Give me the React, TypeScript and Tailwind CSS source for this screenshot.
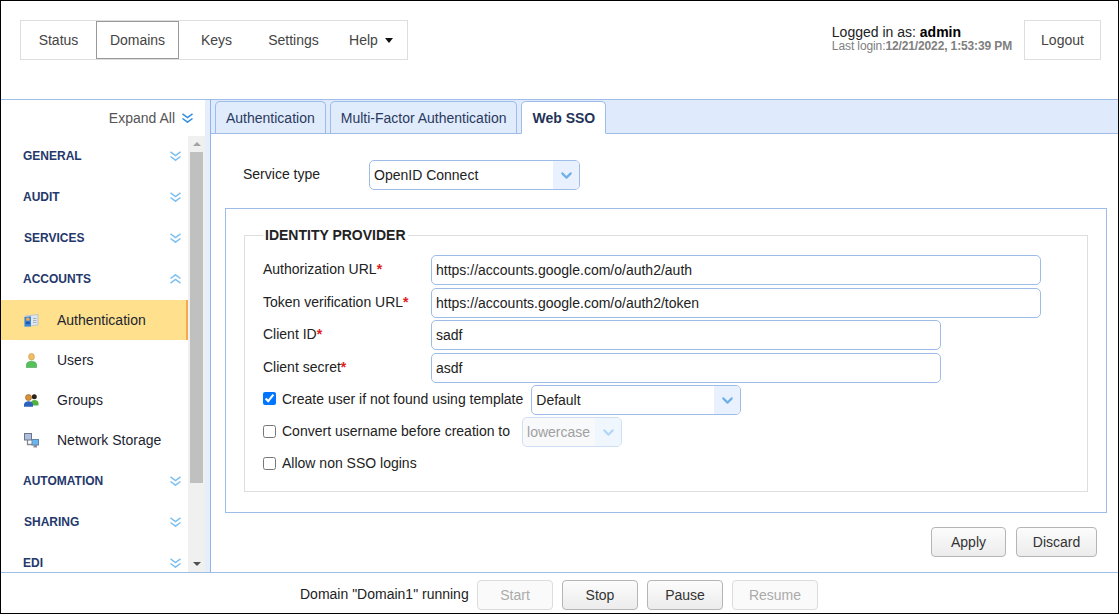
import type { ReactNode } from "react";
import { ChevronDown } from "lucide-react";

function DoubleChevron({ up, className }: { up?: boolean; className: string }) {
  return (
    <svg width="11" height="10" viewBox="0 0 11 10" fill="none" stroke="currentColor" strokeWidth="1.5" className={className}>
      {up ? <path d="M0.500 4.500 5.500 0.800l5 3.700M0.500 9.200 5.500 5.500l5 3.700" /> : <path d="M0.500 0.800 5.500 4.500l5-3.700M0.500 5.500 5.500 9.200l5-3.700" />}
    </svg>
  );
}

function CardIcon() {
  return (
    <svg width="15" height="13" viewBox="0 0 15 13">
      <path d="M1 2 14 0.500V11L1 12.500z" fill="#dfe6ee" stroke="#9fb4cc" strokeWidth="0.6" />
      <path d="M0.500 3 7 2.200V12.500H0.500z" fill="#3c86d8" />
      <circle cx="3.800" cy="5.200" r="1.700" fill="#f0a64a" />
      <path d="M1.500 10c0-2 1-2.800 2.300-2.800S6.100 8 6.100 10z" fill="#1f5cae" />
      <path d="M9 4.500h3.500M9 6.500h3.500M9 8.500h3.500" stroke="#a9b2bc" />
    </svg>
  );
}

function UserIcon() {
  return (
    <svg width="11" height="15" viewBox="0 0 11 15">
      <ellipse cx="5.500" cy="3.700" rx="2.900" ry="3.300" fill="#efbe6a" stroke="#cc9238" strokeWidth="0.6" />
      <path d="M0.300 14.500v-2.500c0-2.400 2.200-3.800 5.200-3.800s5.200 1.400 5.200 3.800v2.500z" fill="#56c05a" stroke="#36994a" strokeWidth="0.5" />
    </svg>
  );
}

function GroupIcon() {
  return (
    <svg width="15" height="13" viewBox="0 0 15 13">
      <circle cx="10.300" cy="2.700" r="2.500" fill="#2c2418" />
      <path d="M7 11.500V9c0-2 1.500-3 3.500-3s4 1 4 3v2.500z" fill="#52b03e" />
      <circle cx="4.500" cy="3.500" r="3" fill="#d9923a" stroke="#8a5a1e" strokeWidth="0.6" />
      <path d="M0 12.800v-2.300c0-2 2-3.300 4.500-3.300S9 8.500 9 10.500v2.300z" fill="#2c62bc" />
    </svg>
  );
}

function NetworkIcon() {
  return (
    <svg width="15" height="15" viewBox="0 0 15 15">
      <path d="M3.500 7v4.500H9" stroke="#8a8a8a" strokeWidth="1.300" fill="none" />
      <rect x="0.500" y="0.500" width="7" height="6.500" fill="#aebfe0" stroke="#6d7488" />
      <rect x="8" y="6.500" width="6.500" height="5.500" fill="#6cb4ee" stroke="#5f86aa" />
      <rect x="9.500" y="12" width="3.500" height="2.500" fill="#8e8e96" />
    </svg>
  );
}

function Select({ text, width, disabled }: { text: string; width: string; disabled?: boolean }) {
  return (
    <div
      className={`${width} h-[30px] shrink-0 border rounded-[5px] flex items-center overflow-hidden text-sm ${
        disabled ? "border-[#cfe0f5] bg-[#f8f9fb] text-[#a0a0a0]" : "border-[#9dbce8] bg-white text-[#222]"
      }`}
    >
      <span className="flex-1 pl-1">{text}</span>
      <span
        className={`w-[26px] h-full flex items-center justify-center ${
          disabled ? "bg-[#f0f6fe] text-[#b5d6f5]" : "bg-[#e8f1fd] text-[#6fb0e8]"
        }`}
      >
        <ChevronDown size={17} strokeWidth={3} />
      </span>
    </div>
  );
}

function Section({ label, open, indent, raised }: { label: string; open?: boolean; indent?: string; raised?: boolean }) {
  return (
    <div className={`h-[41px] shrink-0 flex items-center justify-between pr-[7px] ${indent ?? "pl-[22px]"} ${raised ? "pb-[2px]" : ""}`}>
      <span className="text-xs font-bold text-[#24386b]">{label}</span>
      <DoubleChevron up={open} className="text-[#7cbff0]" />
    </div>
  );
}

function Item({ label, icon, active }: { label: string; icon: ReactNode; active?: boolean }) {
  return (
    <div
      className={`h-10 shrink-0 flex items-center text-sm text-[#1c2430] ${
        active ? "bg-[#ffe08d] border-r-2 border-[#f6a94e]" : ""
      }`}
    >
      <span className="w-[56px] pl-[23px] flex items-center">{icon}</span>
      {label}
    </div>
  );
}

function Tab({ label, active }: { label: string; active?: boolean }) {
  return (
    <div
      className={`px-[10px] flex items-center border border-[#9dbce8] rounded-t-[5px] text-sm ${
        active
          ? "bg-white border-b-white font-bold text-[#1f3358] h-[33px] -mb-px"
          : "bg-[#e0ebfc] border-b-0 text-[#2a3a5c] h-[32px]"
      }`}
    >
      {label}
    </div>
  );
}

function Row({ label, value, width }: { label: string; value: string; width: string }) {
  return (
    <div className="flex items-center h-[30px] mb-[2.5px]">
      <span className="w-[168px] pb-[2px] text-sm text-[#222]">
        {label}
        <span className="text-[#e02020] font-bold">*</span>
      </span>
      <div className={`h-[30px] border border-[#9dbce8] rounded-[5px] bg-white px-1 text-sm text-[#222] flex items-center ${width}`}>
        {value}
      </div>
    </div>
  );
}

function GrayButton({ label, disabled, w }: { label: string; disabled?: boolean; w: string }) {
  return (
    <button
      className={`${w} h-[30px] shrink-0 rounded-[4px] border text-sm ${
        disabled
          ? "border-[#dcdcdc] bg-[#fafafa] text-[#aaa]"
          : "border-[#b5b5b5] bg-gradient-to-b from-[#fcfcfc] to-[#ececec] text-[#333]"
      }`}
    >
      {label}
    </button>
  );
}

export default function App() {
  return (
    <div className="w-[1119px] h-[614px] border border-black bg-white flex flex-col overflow-hidden font-['Liberation_Sans',Arial,sans-serif]">
      {/* Top bar */}
      <header className="h-[98px] shrink-0 flex items-start justify-between pt-[19px] pl-[19px] pr-[17px]">
        <nav className="h-10 flex border border-[#dedede] text-sm text-[#444]">
          <div className="w-[75px] flex items-center justify-center">Status</div>
          <div className="w-[83px] flex items-center justify-center border border-[#999]">Domains</div>
          <div className="w-[75px] flex items-center justify-center">Keys</div>
          <div className="w-[79px] flex items-center justify-center">Settings</div>
          <div className="w-[74px] pl-[2px] flex items-center justify-center gap-[7px]">
            Help
            <span className="w-0 h-0 border-x-4 border-x-transparent border-t-[5px] border-t-[#111]" />
          </div>
        </nav>
        <div className="flex items-center gap-3">
          <div className="pb-[2px] text-[#222]">
            <div className="text-sm leading-[14px]">
              Logged in as: <b className="text-black">admin</b>
            </div>
            <div className="text-xs leading-[14px] text-[#808080] tracking-[-0.1px]">
              Last login:<b className="tracking-[-0.13px]">12/21/2022, 1:53:39 PM</b>
            </div>
          </div>
          <button className="w-[77px] h-10 border border-[#dedede] text-sm text-[#444]">Logout</button>
        </div>
      </header>

      <div className="flex-1 min-h-0 flex border-y border-[#9dbce8]">
        {/* Sidebar */}
        <aside className="w-[210px] shrink-0 flex border-r border-[#8fb4ea]">
          <div className="w-[204px] flex flex-col">
            <div className="h-[36px] shrink-0 flex items-center justify-end gap-[7px] pr-[12px] text-sm text-[#555]">
              Expand All
              <DoubleChevron className="text-[#2f8fe0]" />
            </div>
            <div className="flex-1 min-h-0 flex">
              <div className="w-[187px] flex flex-col overflow-hidden">
                <Section label="GENERAL" raised />
                <Section label="AUDIT" raised />
                <Section label="SERVICES" indent="pl-[23px]" raised />
                <Section label="ACCOUNTS" open raised />
                <Item label="Authentication" icon={<CardIcon />} active />
                <Item label="Users" icon={<span className="pl-[2px]"><UserIcon /></span>} />
                <Item label="Groups" icon={<GroupIcon />} />
                <Item label="Network Storage" icon={<NetworkIcon />} />
                <Section label="AUTOMATION" />
                <Section label="SHARING" indent="pl-[23px]" />
                <Section label="EDI" />
              </div>
              <div className="w-[17px] bg-[#f0f0f0] flex flex-col items-center">
                <span className="mt-[6px] w-0 h-0 border-x-4 border-x-transparent border-b-[4px] border-b-[#a3a3a3]" />
                <div className="mt-[6px] w-[13px] h-[331px] bg-[#c0c0c0]" />
                <span className="mt-auto mb-[6px] w-0 h-0 border-x-4 border-x-transparent border-t-[4px] border-t-[#505050]" />
              </div>
            </div>
          </div>
          <div className="w-[5px] bg-[#e6eef9]" />
        </aside>

        {/* Main */}
        <main className="flex-1 flex flex-col min-w-0">
          <div className="h-[34px] shrink-0 bg-[#dfeafc] border-b border-[#9dbce8] flex items-end gap-[4px] pl-[4px] pt-[2px]">
            <Tab label="Authentication" />
            <Tab label="Multi-Factor Authentication" />
            <Tab label="Web SSO" active />
          </div>
          <div className="flex-1 pt-[26px] pl-[14px] pr-[11px]">
            <div className="flex items-center h-[30px] pl-[18px]">
              <span className="w-[126px] pb-[2px] text-sm text-[#222]">Service type</span>
              <Select text="OpenID Connect" width="w-[211px]" />
            </div>
            <div className="mt-[18px] h-[305px] border border-[#9dbce8] pt-[16px] px-[18px]">
              <fieldset className="border border-[#dedede] h-[267px] pl-[18px] pt-[10px]">
                <legend className="text-sm font-bold text-[#222] px-[2px]">IDENTITY PROVIDER</legend>
                <Row label="Authorization URL" value="https://accounts.google.com/o/auth2/auth" width="w-[610px]" />
                <Row label="Token verification URL" value="https://accounts.google.com/o/auth2/token" width="w-[610px]" />
                <Row label="Client ID" value="sadf" width="w-[510px]" />
                <Row label="Client secret" value="asdf" width="w-[510px]" />
                <div className="flex items-center h-[30px] mb-[2px] text-sm text-[#222]">
                  <input type="checkbox" defaultChecked className="w-[13px] h-[13px] mb-[3px] accent-[#0075ff] mr-[6px]" />
                  <span className="mr-2 pb-[2px]">Create user if not found using template</span>
                  <Select text="Default" width="w-[210px]" />
                </div>
                <div className="flex items-center h-[30px] mb-[2px] text-sm text-[#222]">
                  <input type="checkbox" className="w-[13px] h-[13px] mb-[2px] mr-[6px]" />
                  <span className="mr-3 pb-[2px]">Convert username before creation to</span>
                  <Select text="lowercase" width="w-[100px]" disabled />
                </div>
                <div className="flex items-center h-[30px] pb-[2px] text-sm text-[#222]">
                  <input type="checkbox" className="w-[13px] h-[13px] mr-[6px]" />
                  Allow non SSO logins
                </div>
              </fieldset>
            </div>
            <div className="mt-[14px] flex justify-end gap-[10px] pr-[10px]">
              <GrayButton label="Apply" w="w-[75px]" />
              <GrayButton label="Discard" w="w-[81px]" />
            </div>
          </div>
        </main>
      </div>

      {/* Status bar */}
      <footer className="h-[40px] shrink-0 flex items-center pt-[3px] pl-[299px] gap-[9px] text-sm text-[#222]">
        <span className="w-[168px] pb-px whitespace-nowrap">Domain "Domain1" running</span>
        <GrayButton label="Start" w="w-[76px]" disabled />
        <GrayButton label="Stop" w="w-[76px]" />
        <GrayButton label="Pause" w="w-[76px]" />
        <GrayButton label="Resume" w="w-[86px]" disabled />
      </footer>
    </div>
  );
}
